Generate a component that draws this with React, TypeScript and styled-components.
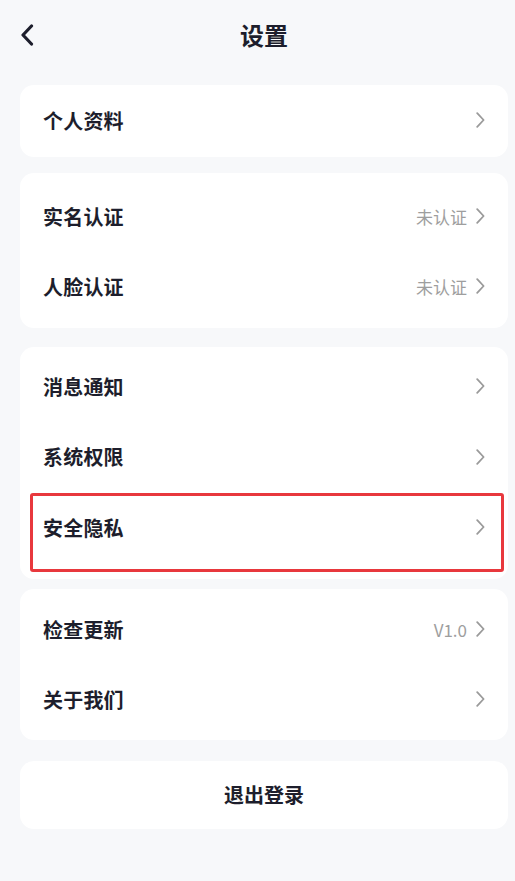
import React from 'react';
import styled, { createGlobalStyle } from 'styled-components';

const GlobalStyle = createGlobalStyle`
  html, body {
    margin: 0;
    padding: 0;
    background: #f7f8fa;
  }
  body {
    font-family: "Noto Sans CJK SC", "Noto Sans", sans-serif;
    color: #1d1e2c;
  }
`;

const Page = styled.div`
  min-height: 881px;
  padding: 0 7px 0 20px;
  box-sizing: border-box;
  background: #f7f8fa;
`;

const Header = styled.header`
  position: relative;
  height: 85px;
  display: flex;
  align-items: flex-start;
  justify-content: center;
`;

const BackButton = styled.button`
  position: absolute;
  left: 0;
  top: 23px;
  width: 16px;
  height: 24px;
  padding: 0;
  border: none;
  background: none;
  display: flex;
  align-items: center;
`;

const Title = styled.h1`
  margin: 17px 0 0;
  font-size: 24px;
  line-height: 36px;
  font-weight: 700;
  color: #1d1e2c;
`;

const Card = styled.section<{ $pt: number; $pb: number; $mb: number }>`
  position: relative;
  background: #ffffff;
  border-radius: 14px;
  padding: ${(p) => p.$pt}px 0 ${(p) => p.$pb}px;
  margin-bottom: ${(p) => p.$mb}px;
`;

const Row = styled.div<{ $h?: number }>`
  height: ${(p) => p.$h ?? 70}px;
  display: flex;
  align-items: center;
  justify-content: space-between;
  padding: 0 23px 2px 23px;
  box-sizing: border-box;
`;

const Label = styled.span`
  font-size: 20px;
  font-weight: 700;
  color: #1d1e2c;
  letter-spacing: 0.2px;
`;

const Right = styled.span`
  display: flex;
  align-items: center;
  gap: 9px;
`;

const Value = styled.span`
  font-size: 17px;
  color: #9e9e9e;
`;

const Highlight = styled.div`
  position: absolute;
  left: 10px;
  right: 4px;
  top: 146px;
  height: 79px;
  border: 3px solid #e8383d;
  border-radius: 3px;
  box-sizing: border-box;
  pointer-events: none;
`;

const LogoutCard = styled.button`
  width: 100%;
  height: 68px;
  border: none;
  border-radius: 14px;
  background: #ffffff;
  font-family: "Noto Sans CJK SC", "Noto Sans", sans-serif;
  font-size: 20px;
  font-weight: 700;
  color: #1d1e2c;
  padding: 0 0 2px;
`;

const Chevron = () => (
  <svg width="9" height="16" viewBox="0 0 9 16" fill="none">
    <path d="M1.2 1.2 L7.6 8 L1.2 14.8" stroke="#9a9a9a" strokeWidth="1.8" strokeLinecap="round" strokeLinejoin="round" />
  </svg>
);

const BackIcon = () => (
  <svg width="14" height="22" viewBox="0 0 14 22" fill="none">
    <path d="M11.5 2 L3 11 L11.5 20" stroke="#1d1e2c" strokeWidth="3.2" strokeLinecap="round" strokeLinejoin="round" />
  </svg>
);

type Item = { label: string; value?: string; h?: number };

const Item = ({ label, value, h }: Item) => (
  <Row $h={h}>
    <Label>{label}</Label>
    <Right>
      {value && <Value>{value}</Value>}
      <Chevron />
    </Right>
  </Row>
);

const App = () => (
  <Page>
    <GlobalStyle />
    <Header>
      <BackButton aria-label="返回">
        <BackIcon />
      </BackButton>
      <Title>设置</Title>
    </Header>

    <Card $pt={0} $pb={0} $mb={16}>
      <Item label="个人资料" h={72} />
    </Card>

    <Card $pt={9} $pb={6} $mb={19}>
      <Item label="实名认证" value="未认证" />
      <Item label="人脸认证" value="未认证" />
    </Card>

    <Card $pt={5} $pb={16} $mb={10}>
      <Item label="消息通知" />
      <Item label="系统权限" h={71} />
      <Item label="安全隐私" />
      <Highlight />
    </Card>

    <Card $pt={6} $pb={5} $mb={21}>
      <Item label="检查更新" value="V1.0" />
      <Item label="关于我们" />
    </Card>

    <LogoutCard>退出登录</LogoutCard>
  </Page>
);

export default App;
